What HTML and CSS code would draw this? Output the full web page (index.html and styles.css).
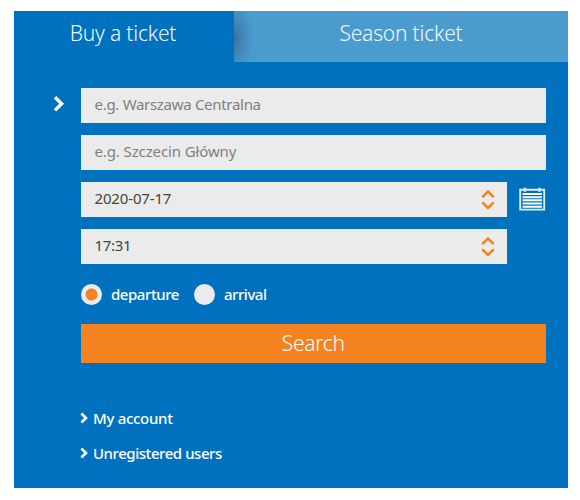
FILE: index.html
```html
<!DOCTYPE html>
<html lang="en">
<head>
    <meta charset="UTF-8">
    <title>Buy a ticket</title>
    <link rel="stylesheet" href="styles.css">
</head>
<body>

    <div class="panel">
        <ul class="tabs">
            <li class="tab active"><span class="buy">Buy a ticket</span></li>
            <li class="tab"><span class="season">Season ticket</span></li>
        </ul>

        <form class="search">
            <div class="row">
                <svg class="arrow" width="12" height="18" viewBox="0 0 12 18"><path d="M2 2.2 L8.6 8.8 L2 15.4"/></svg>
                <div class="field hint"><span class="from">e.g. Warszawa Centralna</span></div>
            </div>
            <div class="row">
                <div class="field hint"><span class="to">e.g. Szczecin Główny</span></div>
            </div>
            <div class="row">
                <div class="field">
                    <span class="date">2020-07-17</span>
                    <svg class="spin" width="14" height="20" viewBox="0 0 14 20"><path d="M1.3 7.2 L7 1.5 L12.7 7.2 M1.3 12.3 L7 18 L12.7 12.3"/></svg>
                </div>
                <svg class="calendar" width="27" height="24" viewBox="0 0 27 24">
                    <path class="frame" d="M1.2 2.8 H25.2 V22.6 H1.2 Z"/>
                    <path class="lines" d="M3.6 7 H23 M3.6 10.2 H23 M3.6 13.3 H23 M3.6 16.6 H23 M3.6 19.7 H23"/>
                    <path class="ring" d="M5.9 0.8 V4.8 M20.5 0.8 V4.8"/>
                </svg>
            </div>
            <div class="row">
                <div class="field">
                    <span class="time">17:31</span>
                    <svg class="spin" width="14" height="20" viewBox="0 0 14 20"><path d="M1.3 7.2 L7 1.5 L12.7 7.2 M1.3 12.3 L7 18 L12.7 12.3"/></svg>
                </div>
                <div class="space"></div>
            </div>

            <div class="radios">
                <span class="radio checked"></span><span class="departure">departure</span>
                <span class="radio"></span><span class="arrival">arrival</span>
            </div>

            <div class="button"><span class="label">Search</span></div>
        </form>

        <ul class="links">
            <li><svg width="8" height="12" viewBox="0 0 8 12"><path d="M1.4 1.5 L6 6 L1.4 10.5"/></svg><span class="account">My account</span></li>
            <li><svg width="8" height="12" viewBox="0 0 8 12"><path d="M1.4 1.5 L6 6 L1.4 10.5"/></svg><span class="users">Unregistered users</span></li>
        </ul>
    </div>

</body>
</html>
```
FILE: styles.css
```css
body,ul,li,form{ margin: 0; padding: 0; }
li{list-style: none;}
svg{
    fill: none;
    flex: none;
}

body{
    background: #fff;
    font-family: "Noto Sans", "Open Sans", sans-serif;
    font-size: 15px;
    letter-spacing: -0.3px;
}

.panel{
    box-sizing: border-box;
    width: 554px;
    height: 477px;
    margin: 11px 0 0 14px;
    background: #0071be;
}

/* tabs */
.tabs{
    display: flex;
    height: 51px;
    color: #f0f7fc;
    font-size: 21px;
    font-weight: 350;
    line-height: 44px;
    text-align: center;
    letter-spacing: -0.2px;
}

.tab{
    flex: 1;
    background: radial-gradient(ellipse 20px 40px at 0 55%, #39719b 0, #4288b8 45%, #4c9bcf 100%);
}

.tab.active{
    flex: none;
    width: 218px;
    padding-right: 2px;
    background: none;
}

/* form */
.search{
    padding: 26px 22.5px 0 67px;
}

.row{
    display: flex;
    position: relative;
    height: 35px;
    margin-bottom: 12px;
}

.arrow{
    position: absolute;
    left: -28px;
    top: 7px;
    stroke: #fff;
    stroke-width: 3.4;
}

.field{
    display: flex;
    flex: 1;
    align-items: center;
    justify-content: space-between;
    padding: 0 12px 0 13.5px;
    background: #ebebeb;
    color: #444;
    line-height: 33px;
    white-space: nowrap;
}

.field span{
    height: 35px;
}

.field.hint{
    color: #808080;
}

.field .to{
    letter-spacing: -0.12px;
}

.field .date{
    letter-spacing: -0.15px;
}

.spin{
    stroke: #f58220;
    stroke-width: 2.5;
}

.calendar{
    margin: 5px 0 0 11.5px;
}

.calendar .frame{
    stroke: #d9edfa;
    stroke-width: 1.9;
}

.calendar .lines{
    stroke: #fff;
    stroke-width: 2;
}

.calendar .ring{
    stroke: #d9edfa;
    stroke-width: 2.5;
}

.space{
    width: 38.5px;
}

.radios{
    display: flex;
    align-items: center;
    height: 21px;
    margin-top: 20px;
    color: #fff;
    font-weight: 500;
    line-height: 21px;
    letter-spacing: -0.45px;
}

.radio{
    box-sizing: border-box;
    width: 21px;
    height: 21px;
    margin-right: 9px;
    border-radius: 100%;
    background: #ebebeb;
}

.radio.checked{
    background: radial-gradient(circle, #f58220 5.6px, #ebebeb 6.4px);
}

.departure{
    margin-right: 15px;
}

.button{
    height: 39px;
    margin-top: 19px;
    background: #f58220;
    color: #fff;
    font-size: 21px;
    font-weight: 300;
    line-height: 38px;
    text-align: center;
}

/* links */
.links{
    padding: 45px 0 0 66px;
    color: #fff;
    font-weight: 500;
}

.links li{
    display: flex;
    align-items: center;
    height: 20px;
    margin-bottom: 15px;
}

.links svg{
    margin-right: 5px;
    stroke: #fff;
    stroke-width: 2.6;
}

.links .users{
    letter-spacing: -0.45px;
}
```
